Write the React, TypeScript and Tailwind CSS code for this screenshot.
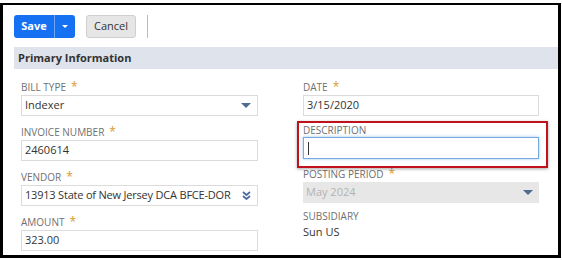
const font = "font-['Open_Sans','Liberation_Sans',sans-serif]";

function Caret({ className = "" }: { className?: string }) {
  return (
    <svg width="10" height="5" viewBox="0 0 10 5" className={`shrink-0 ${className}`}>
      <path d="M0 0h10L5 5z" fill="currentColor" />
    </svg>
  );
}

function DoubleChevron() {
  return (
    <svg width="9" height="9" viewBox="0 0 9 9" className="shrink-0 text-[#4d6b9c]">
      <path d="M1 1l3.5 3 3.5-3" fill="none" stroke="currentColor" strokeWidth="1.8" />
      <path d="M1 5l3.5 3 3.5-3" fill="none" stroke="currentColor" strokeWidth="1.8" />
    </svg>
  );
}

function Label({ text, required, tight }: { text: string; required?: boolean; tight?: boolean }) {
  return (
    <div
      className={`text-[10px] uppercase text-[#707070] ${tight ? "leading-[14px]" : "leading-[15px]"}`}
    >
      {text}
      {required && <span className="ml-[5px] text-[12px] text-[#d89b2c]">*</span>}
    </div>
  );
}

function Box({
  value,
  arrow,
  chevron,
  valueClass = "",
}: {
  value: string;
  arrow?: boolean;
  chevron?: boolean;
  valueClass?: string;
}) {
  return (
    <div className="flex h-[21px] items-center justify-between gap-[4px] border border-[#dcdcdc] bg-white pl-[3px] pr-[6px] text-[11px] text-[#333]">
      <span className={`whitespace-nowrap ${valueClass}`}>{value}</span>
      {arrow && <Caret className="text-[#4f6b8d]" />}
      {chevron && <DoubleChevron />}
    </div>
  );
}

export default function App() {
  return (
    <div className={`h-[260px] w-[562px] bg-white ${font}`}>
      <div className="mt-[3px] h-[255px] w-[561px] border-t-2 border-r-[3px] border-b-[3px] border-l-[3px] border-black">
        <div className="flex items-center pt-[10px] pl-[11px]">
          <div className="flex h-[23px] overflow-hidden rounded-[3px] bg-[#1671f2] text-white">
            <div className="flex w-[40px] items-center justify-center text-[11px] font-bold">Save</div>
            <div className="w-px bg-[#6da6f7]" />
            <div className="flex w-[20px] items-center justify-center">
              <Caret className="h-[3px] w-[6px]" />
            </div>
          </div>
          <div className="ml-[11px] flex h-[23px] w-[50px] items-center justify-center rounded-[3px] border border-[#cfcfcf] bg-[#e6e6e6] text-[11px] text-[#333]">
            Cancel
          </div>
          <div className="ml-[11px] h-[23px] w-px bg-[#bdbdbd]" />
        </div>

        <div className="mt-[9px] ml-[11px] flex h-[22px] items-center bg-[#dfe3eb] pl-[4px] text-[11px] font-bold text-[#333]">
          Primary Information
        </div>

        <div className="mt-[10px] flex gap-[45px] pl-[18px]">
          <div className="w-[237px]">
            <Label text="Bill Type" required />
            <Box value="Indexer" arrow />
            <div className="mt-[8px]">
              <Label text="Invoice Number" required />
              <Box value="2460614" />
            </div>
            <div className="mt-[8px]">
              <Label text="Vendor" required />
              <Box
                value="13913 State of New Jersey DCA BFCE-DOR"
                chevron
                valueClass="tracking-[-0.2px]"
              />
            </div>
            <div className="mt-[8px]">
              <Label text="Amount" required />
              <Box value="323.00" />
            </div>
          </div>

          <div className="w-[236px]">
            <Label text="Date" required />
            <Box value="3/15/2020" />
            <div className="relative mt-[7px]">
              <Label text="Description" tight />
              <div className="flex h-[22px] items-center border border-[#7aa9de] bg-white pl-[4px] shadow-[0_0_3px_#9cc5f0]">
                <span className="h-[13px] w-px bg-[#333]" />
              </div>
              <div className="absolute top-[-2px] left-[-6px] h-[47px] w-[251px] border-2 border-[#c1121c] shadow-[0_1px_3px_rgba(0,0,0,0.35)]" />
            </div>
            <div className="mt-[7px]">
              <Label text="Posting Period" required />
              <div className="flex h-[21px] items-center justify-between bg-[#e7e7e7] pl-[3px] pr-[6px] text-[11px] text-[#b3b3b3]">
                <span>May 2024</span>
                <Caret className="text-[#4f6b8d]" />
              </div>
            </div>
            <div className="mt-[6px]">
              <Label text="Subsidiary" />
              <div className="text-[11px] leading-[15px] text-[#333]">Sun US</div>
            </div>
          </div>
        </div>
      </div>
    </div>
  );
}
